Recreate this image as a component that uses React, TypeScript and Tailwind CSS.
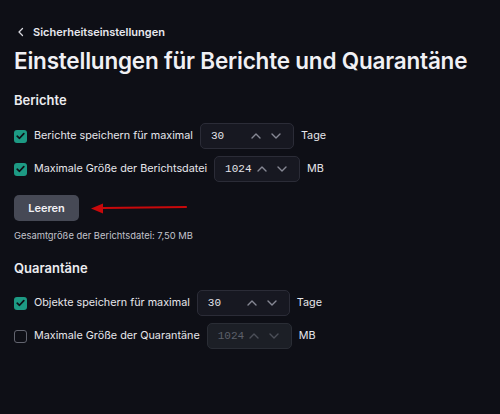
import React from "react";

const ChevronUp = ({ c }: { c: string }) => (
  <svg width="10" height="6" viewBox="0 0 10 6" fill="none">
    <path d="M1 5 L5 1 L9 5" stroke={c} strokeWidth="1.4" strokeLinecap="round" strokeLinejoin="round" />
  </svg>
);

const ChevronDown = ({ c }: { c: string }) => (
  <svg width="10" height="6" viewBox="0 0 10 6" fill="none">
    <path d="M1 1 L5 5 L9 1" stroke={c} strokeWidth="1.4" strokeLinecap="round" strokeLinejoin="round" />
  </svg>
);

const Check = ({ on }: { on: boolean }) =>
  on ? (
    <span className="w-[13px] h-[13px] rounded-[3px] bg-[#1d9a84] flex items-center justify-center shrink-0">
      <svg width="9" height="8" viewBox="0 0 9 8" fill="none">
        <path d="M1.2 4.2 L3.5 6.3 L7.8 1.6" stroke="#0e1016" strokeWidth="1.7" strokeLinecap="round" strokeLinejoin="round" />
      </svg>
    </span>
  ) : (
    <span className="w-[13px] h-[13px] rounded-[3px] border-[1.5px] border-[#62646f] shrink-0" />
  );

const NumInput = ({ value, width, disabled }: { value: string; width: string; disabled?: boolean }) => (
  <div
    className={`${width} h-[26px] rounded-[5px] border flex items-center pl-[10px] pr-[12px] ${
      disabled ? "bg-[#1c1f26] border-[#2a2d35] text-[#5d606a]" : "bg-[#171821] border-[#2b2c37] text-[#e4e4ea]"
    }`}
  >
    <span className="flex-1 text-[11px] font-['Liberation_Mono',monospace]">{value}</span>
    <div className="flex items-center gap-[10px]">
      <ChevronUp c={disabled ? "#4c4f58" : "#868894"} />
      <ChevronDown c={disabled ? "#4c4f58" : "#868894"} />
    </div>
  </div>
);

const Row = ({ on, label, value, width, unit, disabled }: { on: boolean; label: string; value: string; width: string; unit: string; disabled?: boolean }) => (
  <div className="flex items-center h-[26px]">
    <Check on={on} />
    <span className="ml-[7px] mr-[7px] text-[10.8px] text-[#e6e6eb]">{label}</span>
    <NumInput value={value} width={width} disabled={disabled} />
    <span className="ml-[7px] text-[10.8px] text-[#e6e6eb]">{unit}</span>
  </div>
);

export default function App() {
  return (
    <div className="w-[500px] h-[414px] bg-[#0e0f16] text-[#ececf0] font-['Inter',sans-serif] pl-[14px] pt-[24px] overflow-hidden">
      <div className="flex items-center h-[16px]">
        <svg width="8" height="10" viewBox="0 0 8 10" fill="none" className="ml-[3px]">
          <path d="M5.5 1.5 L2 5 L5.5 8.5" stroke="#d8d8de" strokeWidth="1.3" strokeLinecap="round" strokeLinejoin="round" />
        </svg>
        <span className="ml-[8px] text-[11px] font-semibold text-[#e8e8ee]">Sicherheitseinstellungen</span>
      </div>
      <h1 className="mt-[6px] text-[22.5px] leading-[30px] font-semibold tracking-[-0.2px] text-[#f0f0f4]">
        Einstellungen für Berichte und Quarantäne
      </h1>
      <h2 className="mt-[15px] text-[13px] leading-[18px] font-semibold">Berichte</h2>
      <div className="mt-[14px] flex flex-col gap-[7px]">
        <Row on label="Berichte speichern für maximal" value="30" width="w-[94px]" unit="Tage" />
        <Row on label="Maximale Größe der Berichtsdatei" value="1024" width="w-[86px]" unit="MB" />
      </div>
      <div className="mt-[13px] flex items-center">
        <button className="w-[65px] h-[26px] rounded-[5px] bg-[#464955] text-[11px] font-semibold text-[#f2f2f6]">
          Leeren
        </button>
        <svg width="100" height="12" viewBox="0 0 100 12" className="ml-[12px]">
          <path d="M12 6 L95 5" stroke="#c8090b" strokeWidth="2.2" strokeLinecap="round" />
          <path d="M0 6.5 L12 1.5 L12 11.5 Z" fill="#c8090b" />
        </svg>
      </div>
      <p className="mt-[8px] text-[9.4px] leading-[14px] text-[#c3c4cc]">Gesamtgröße der Berichtsdatei: 7,50 MB</p>
      <h2 className="mt-[16px] text-[13px] leading-[18px] font-semibold">Quarantäne</h2>
      <div className="mt-[13px] flex flex-col gap-[7px]">
        <Row on label="Objekte speichern für maximal" value="30" width="w-[93px]" unit="Tage" />
        <Row on={false} label="Maximale Größe der Quarantäne" value="1024" width="w-[85px]" unit="MB" disabled />
      </div>
    </div>
  );
}
